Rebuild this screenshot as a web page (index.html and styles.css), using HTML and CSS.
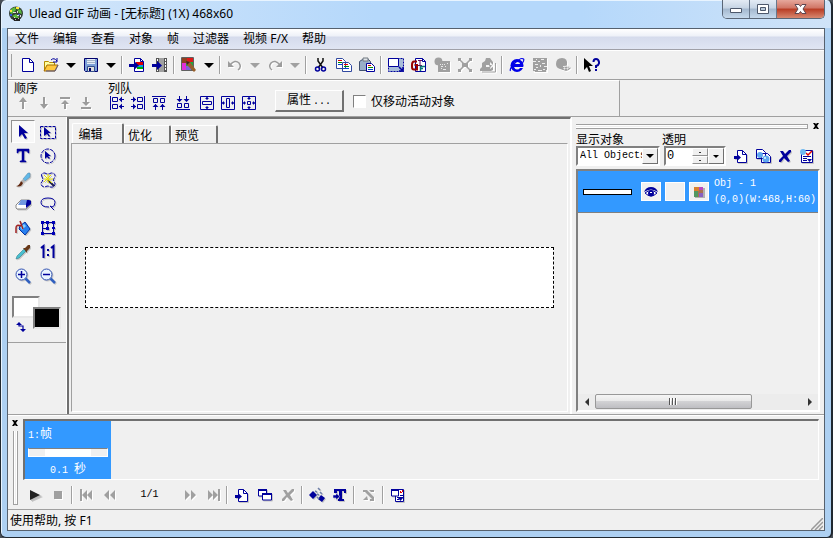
FILE: index.html
```html
<!DOCTYPE html>
<html lang="zh-CN">
<head>
    <meta charset="UTF-8">
    <meta name="viewport" content="width=device-width, initial-scale=1.0">
    <title>Ulead GIF 动画</title>
    <link rel="stylesheet" href="styles.css">
</head>
<body>
    <!-- icon set, 16x16 grid -->
    <svg class="sprite" aria-hidden="true">
        <symbol id="app" viewBox="0 0 16 16"><circle cx="8" cy="7.500" r="7" fill="#344038"/><path d="M3 3l4-2 1 3-4 4-2-1zM9 3l4 1 1 4-3-1zM4 10l4-2 3 3-2 2z" fill="#5bb83c"/><path d="M2 4h2v2H2zM8 1h3v2H8z" fill="#ffe93a"/><path d="M2 8h2v2H2zM10 8h2v1h-2z" fill="#3059d6"/><path d="M5 6h3v1H5zM9 5h1v2H9zM6 11h1v2H6zM12 9h1v2h-1zM9 9h2v1H9z" fill="#ddd"/><path d="M5 12h7v3H6z" fill="#252525"/><path d="M7 13h1v1H7zM10 12h1v1h-1z" fill="#bbb"/></symbol>
        <symbol id="new" viewBox="0 0 16 16"><path d="M2.500 1.500h7l4 4v9h-11z" fill="#fff" stroke="#00009c"/><path d="M9.500 1.500v4h4" fill="none" stroke="#00009c"/></symbol>
        <symbol id="open" viewBox="0 0 16 16"><path d="M1.500 13.500v-9h4l1 1h5v3" fill="#ffffa0" stroke="#b58a00"/><path d="M1 14l3-6h11l-3 6z" fill="#ffc83c" stroke="#a46c00"/><path d="M3 14h9l3-6" fill="none" stroke="#5a5a8c"/><path d="M8 3q3-3 6 1M14 1v4h-4" fill="none" stroke="#00009c"/></symbol>
        <symbol id="save" viewBox="0 0 16 16"><path d="M1.500 1.500h13v13h-12l-1-1z" fill="#7da0d8" stroke="#00006c"/><path d="M4 2h8v5H4z" fill="#e4ecf8"/><path d="M4 3h8v1H4zM4 5h8v1H4z" fill="#a5b4c8"/><path d="M4.500 9.500h7v5h-7z" fill="#ddd" stroke="#334d8c"/><path d="M6 11h2v3H6z" fill="#00006c"/></symbol>
        <symbol id="import" viewBox="0 0 16 16"><path d="M5.500 5V1.500h6l3 3v10h-9V11" fill="#fff" stroke="#00009c"/><path d="M11.500 1.500v3h3" fill="none" stroke="#00009c"/><path d="M7 5h7v3H7z" fill="#e00000"/><path d="M9 8h5v2H9z" fill="#00a0e8"/><path d="M8 10h6v2H8z" fill="#00b000"/><path d="M0 7h5V4l5 4.500L5 13v-3H0z" fill="#00009c"/></symbol>
        <symbol id="film" viewBox="0 0 16 16"><path d="M4 1h11v14H4z" fill="#555"/><path d="M7 1h5v14H7z" fill="#a0a0a0"/><path d="M13 2h1v2h-1zM13 5h1v2h-1zM13 8h1v2h-1zM13 11h1v2h-1zM5 2h1v2H5zM5 12h1v2H5z" fill="#fff"/><path d="M0 7h5V4l5 4.500L5 13v-3H0z" fill="#00009c"/></symbol>
        <symbol id="magic" viewBox="0 0 16 16"><path d="M1 1h11v12H1z" fill="#20a840"/><path d="M1 1h5v5H1z" fill="#904020"/><path d="M6 1h6v4H6z" fill="#e01818"/><path d="M1 6h4v7H1z" fill="#e030d8"/><path d="M5 9h5v4H5z" fill="#8060d8"/><path d="M.5.500h12v13H.5z" fill="none" stroke="#606060"/><path d="M5 4l4 1 6 8-2 2-7-7z" fill="#98602c"/><path d="M5 4l4 1-3 3z" fill="#482020"/></symbol>
        <symbol id="undo" viewBox="0 0 16 16"><path d="M3 8q5-6 9-2 3 4-1 7" fill="none" stroke="#9c9c9c" stroke-width="1.500"/><path d="M1 4v6h6z" fill="#9c9c9c"/></symbol>
        <symbol id="redo" viewBox="0 0 16 16"><path d="M13 8Q8 2 4 6q-3 4 1 7" fill="none" stroke="#9c9c9c" stroke-width="1.500"/><path d="M15 4v6H9z" fill="#9c9c9c"/></symbol>
        <symbol id="cut" viewBox="0 0 16 16"><path d="M5 1v3l5 7M10 1v3l-5 7" fill="none" stroke="#111" stroke-width="1.500"/><circle cx="4.500" cy="12" r="2" fill="none" stroke="#00009c" stroke-width="1.500"/><circle cx="10.500" cy="12" r="2" fill="none" stroke="#00009c" stroke-width="1.500"/></symbol>
        <symbol id="copy" viewBox="0 0 16 16"><path d="M.5 1.500h6l3 3v7h-9zM6.500 5.500h6l3 3v6h-9z" fill="#fff" stroke="#3048a0"/><path d="M2 3.500h4M8 7.500h4" stroke="#d00"/><path d="M2 5.500h4M8 9.500h5" stroke="#080"/><path d="M2 7.500h4M8 11.500h5" stroke="#04c"/></symbol>
        <symbol id="paste" viewBox="0 0 16 16"><path d="M.5 4.500l3-2h6l2 2v9H.5z" fill="#98aec8" stroke="#405070"/><path d="M4 1h5v3H4z" fill="#e0e4e8" stroke="#707880"/><path d="M7.500 6.500h5l3 3v5h-8z" fill="#fff" stroke="#00009c"/><path d="M9 8.500h3" stroke="#d00"/><path d="M9 10.500h5" stroke="#080"/><path d="M9 12.500h5" stroke="#04c"/></symbol>
        <symbol id="resize" viewBox="0 0 16 16"><path d="M1 1h14v14H1z" fill="#a8bdd8"/><path d="M.5 1.500h15v13H.5z" fill="none" stroke="#00009c" stroke-dasharray="2 1"/><path d="M.5 1.500h10v8H.5z" fill="#fff" stroke="#00009c"/><path d="M11 10l3 3M15 10v4h-4" fill="none" stroke="#00009c" stroke-width="1.500"/></symbol>
        <symbol id="gif" viewBox="0 0 16 16"><path d="M4.500 1.500h7l3 3v10h-10z" fill="#fff" stroke="#00009c"/><path d="M11.500 1.500v3h3" fill="none" stroke="#00009c"/><path d="M6 4.500H3Q1 4.500 1 8v2q0 2.500 2 2.500h3V8H3.500" fill="none" stroke="#980000" stroke-width="2"/><path d="M7 3.500h4M9 4v5M7 8.500h4" stroke="#601060"/><path d="M9 9.500h5M9 11.500h3M9.500 9v5" fill="none" stroke="#087878" stroke-width="1.500"/></symbol>
        <symbol id="g-obj" viewBox="0 0 16 16"><circle cx="4.500" cy="4.500" r="4" fill="#a0a0a0"/><path d="M4 4h12v11H4z" fill="#a0a0a0"/><path d="M6 7h1v1H6zM8 7h1v1H8zM10 7h1v1h-1zM7 9h2v1H7zM11 9h1v1h-1zM7 11h1v1H7zM9 12h3v1H9zM13 6h1v1h-1z" fill="#e8e8e8"/></symbol>
        <symbol id="g-x" viewBox="0 0 16 16"><path d="M3 3l10 10M13 3L3 13" stroke="#a0a0a0" stroke-width="1.500"/><path d="M1 1h3v3H1zM12 1h3v3h-3zM1 12h3v3H1zM12 12h3v3h-3zM5 6h6v4H5z" fill="#a0a0a0"/></symbol>
        <symbol id="g-hat" viewBox="0 0 16 16"><path d="M2 10V6l3-2 1-3h4l3 4v6H2zM0 12l2-2h11v3l-2 1H0z" fill="#a0a0a0"/><path d="M6 8h4V5l4 4-4 3v-2H6z" fill="#f4f4f4"/><path d="M9 8h3l-2 3z" fill="#a0a0a0"/><path d="M15.500 6v9H2" fill="none" stroke="#a0a0a0"/></symbol>
        <symbol id="ie" viewBox="0 0 16 16"><circle cx="8" cy="8.500" r="6.500" fill="#0000e8"/><path d="M5 7q0-2 3-2t3 2zM5 10h10v1h-4q-1 1.500-3 1.500T5 10z" fill="#f0f0f0"/><path d="M1.500 14Q0 12 6 6t8.500-4q1 1-1 4" fill="none" stroke="#0000e8" stroke-width="1.200"/></symbol>
        <symbol id="g-mosaic" viewBox="0 0 16 16"><path d="M1 1h14v14H1z" fill="#a0a0a0"/><path d="M4 2h1v1H4zM9 2h3v1H9zM1 4h3v1H1zM6 4h2v1H6zM3 7h3v1H3zM10 6h3v1h-3zM8 8h1v2H8zM4 10h2v1H4zM12 9h3v1h-3zM2 12h2v1H2zM6 13h4v1H6zM11 12h2v1h-2zM14 13h1v2h-1zM1 14h2v1H1z" fill="#eee"/></symbol>
        <symbol id="g-globe" viewBox="0 0 16 16"><path d="M12 8q1-7-5-7-6 0-6 6 0 4 4 5l3 1z" fill="#a0a0a0"/><path d="M6 11q5-5 10 0-5 6-10 0z" fill="#a0a0a0"/><path d="M8 9.500q4-1 7 1M9 11h1v1H9zM12 11h1v1h-1z" fill="none" stroke="#eee"/></symbol>
        <symbol id="help" viewBox="0 0 16 16"><path d="M0 1v12l3-3 2 5 2-1-2-5h4z" fill="#000"/><path d="M9.500 5q0-3 2.500-3t3 3-3 4v2" fill="none" stroke="#00009c" stroke-width="2"/><path d="M11 12h2v2h-2z" fill="#00009c"/></symbol>
        <symbol id="up" viewBox="0 0 16 16"><path d="M8 2l4 5H9v7H7V7H4z" fill="#9c9c9c"/></symbol>
        <symbol id="down" viewBox="0 0 16 16"><path d="M8 14l4-5H9V2H7v7H4z" fill="#9c9c9c"/></symbol>
        <symbol id="top" viewBox="0 0 16 16"><path d="M3 2h10v2H3zM8 5l4 4H9v5H7V9H4z" fill="#9c9c9c"/></symbol>
        <symbol id="bottom" viewBox="0 0 16 16"><path d="M3 12h10v2H3zM8 11L4 7h3V2h2v5h3z" fill="#9c9c9c"/></symbol>
        <symbol id="al-left" viewBox="0 0 16 16"><path d="M1.500 1v14M3.500 2.500h5v4h-5zM3.500 9.500h5v4h-5zM10 4.500h5M10 11.500h5" fill="none" stroke="#00009c"/><path d="M10 4.500l3-3v6zM10 11.500l3-3v6z" fill="#00009c"/></symbol>
        <symbol id="al-right" viewBox="0 0 16 16"><path d="M14.500 1v14M7.500 2.500h5v4h-5zM7.500 9.500h5v4h-5zM1 4.500h5M1 11.500h5" fill="none" stroke="#00009c"/><path d="M6 4.500l-3-3v6zM6 11.500l-3-3v6z" fill="#00009c"/></symbol>
        <symbol id="al-top" viewBox="0 0 16 16"><path d="M1 1.500h14M2.500 3.500h4v4h-4zM9.500 3.500h4v4h-4zM4.500 9v6M11.500 9v6" fill="none" stroke="#00009c"/><path d="M4.500 9l-3 3h6zM11.500 9l-3 3h6z" fill="#00009c"/></symbol>
        <symbol id="al-bottom" viewBox="0 0 16 16"><path d="M1 14.500h14M2.500 8.500h4v4h-4zM9.500 8.500h4v4h-4zM4.500 1v5M11.500 1v5" fill="none" stroke="#00009c"/><path d="M4.500 7l-3-3h6zM11.500 7l-3-3h6z" fill="#00009c"/></symbol>
        <symbol id="ce-v" viewBox="0 0 16 16"><path d="M1.500 1.500h13v13h-13zM3.500 6.500h9v3h-9zM8 2v3M8 11v3" fill="none" stroke="#00009c"/><path d="M6 4l2-2 2 2zM6 12l2 2 2-2z" fill="#00009c"/></symbol>
        <symbol id="ce-h" viewBox="0 0 16 16"><path d="M1.500 1.500h13v13h-13zM6.500 3.500h3v9h-3zM2 8h3M11 8h3" fill="none" stroke="#00009c"/><path d="M4 6L2 8l2 2zM12 6l2 2-2 2z" fill="#00009c"/></symbol>
        <symbol id="ce-b" viewBox="0 0 16 16"><path d="M1.500 1.500h13v13h-13zM6.500 6.500h3v3h-3zM8 2v3M8 11v3M2 8h3M11 8h3" fill="none" stroke="#00009c"/><path d="M6 4l2-2 2 2zM6 12l2 2 2-2zM4 6L2 8l2 2zM12 6l2 2-2 2z" fill="#00009c"/></symbol>
        <symbol id="t-pick" viewBox="0 0 16 16"><path d="M4 1v12l3-3 3 5 2-1-3-5h4z" fill="#00009c"/></symbol>
        <symbol id="t-rect" viewBox="0 0 16 16"><path d="M.5 2.500h15v12H.5z" fill="none" stroke="#00009c" stroke-dasharray="3 1"/><path d="M4 3v9l3-2 2 3 1-1-2-3h3z" fill="#00009c"/></symbol>
        <symbol id="t-text" viewBox="0 0 16 16"><path d="M2 1h12v4h-1q0-2-2-2H9v9q0 1 2 1v1H5v-1q2 0 2-1V3H5Q3 3 3 5H2z" fill="#00009c" stroke="#00009c" stroke-width=".5"/></symbol>
        <symbol id="t-oval" viewBox="0 0 16 16"><circle cx="8" cy="8" r="7" fill="none" stroke="#00009c" stroke-dasharray="4 1"/><path d="M5 3v8l2-2 2 2 1-1-2-2h3z" fill="#00009c"/></symbol>
        <symbol id="t-brush" viewBox="0 0 16 16"><path d="M15 1v4l-5 4-2-2 5-6z" fill="#60b8e8" stroke="#5080a0" stroke-width=".5"/><path d="M8 7l2 2-2 2-2-2z" fill="#b0b0b0"/><path d="M6 9l2 2q-2 5-7 3 3 0 5-5z" fill="#602810"/></symbol>
        <symbol id="t-wand" viewBox="0 0 16 16"><path d="M2 5q-2-4 3-4 3 2 6 0 5 0 4 4-3 3 0 6 0 5-5 4-2-2-5 0-4 0-4-4 3-3 1-6z" fill="none" stroke="#00009c" stroke-dasharray="4 1"/><path d="M8 8l6 6" stroke="#202050" stroke-width="2"/><path d="M8 2v9M4 7h9M4 3l8 8M11 3l-7 7" stroke="#e8e000"/></symbol>
        <symbol id="t-erase" viewBox="0 0 16 16"><path d="M1 9l5-5h8l2 1v3l-5 5H2l-1-1z" fill="#fff" stroke="#888"/><path d="M6 4h8l2 1-4 4H3z" fill="#7098e0"/><path d="M12 4h2l2 1v3l-5 4V8z" fill="#00009c"/></symbol>
        <symbol id="t-lasso" viewBox="0 0 16 16"><path d="M9 11q-8 0-8-4.500T8 2t7 4.500q0 4-3 4.500l-2-1 4 4" fill="none" stroke="#00009c"/></symbol>
        <symbol id="t-fill" viewBox="0 0 16 16"><path d="M5 6l5-4 5 7-5 6-6-6z" fill="#2880f0" stroke="#0030a0"/><path d="M5 7l4-3 2 2-4 4z" fill="#80d0ff"/><path d="M6 6Q1 4 1 8v5M5 1l3 8" stroke="#a02020" stroke-width="1.500" fill="none"/></symbol>
        <symbol id="t-trans" viewBox="0 0 16 16"><path d="M2.500 2.500h11v11h-11zM7.500 2.500v6h-5" fill="none" stroke="#00009c"/><path d="M1 1h3v3H1zM6 1h3v3H6zM12 1h3v3h-3zM1 12h3v3H1zM12 12h3v3h-3zM6 7h3v3H6zM12 7h3v2h-3z" fill="#0000b8"/></symbol>
        <symbol id="t-drop" viewBox="0 0 16 16"><path d="M1 15l1-3 7-7 2 2-7 7z" fill="#48c0d0" stroke="#207080" stroke-width=".5"/><path d="M8 4l2 0 3-3 2 0v3l-3 3v2z" fill="#683818"/></symbol>
        <symbol id="t-one" viewBox="0 0 16 16"><path d="M1 4l2.500-2v12M11 4l2.500-2v12" fill="none" stroke="#00009c" stroke-width="2"/><path d="M7 5h2v2H7zM7 10h2v2H7z" fill="#00009c"/></symbol>
        <symbol id="t-zin" viewBox="0 0 16 16"><circle cx="6.500" cy="6.500" r="5.500" fill="#e8f4ff" stroke="#3050b0"/><path d="M3 6.500h7M6.500 3v7" stroke="#00009c" stroke-width="1.500"/><path d="M10.500 10.500l4.500 4.500" stroke="#3060c0" stroke-width="2.500"/></symbol>
        <symbol id="t-zout" viewBox="0 0 16 16"><circle cx="6.500" cy="6.500" r="5.500" fill="#e8f4ff" stroke="#3050b0"/><path d="M3 6.500h7" stroke="#00009c" stroke-width="1.500"/><path d="M10.500 10.500l4.500 4.500" stroke="#3060c0" stroke-width="2.500"/></symbol>
        <symbol id="swap" viewBox="0 0 10 10"><path d="M3 1v3h4v5" fill="none" stroke="#00009c" stroke-width="1.200"/><path d="M0 3l3-3 3 3zM4 7l3 3 3-3z" fill="#00009c"/></symbol>
        <symbol id="add" viewBox="0 0 16 16"><path d="M4.500 7V2.500h5l4 4v8h-9V11" fill="#fff" stroke="#00009c"/><path d="M9.500 2.500v4h4" fill="none" stroke="#00009c"/><path d="M1 8h3V6l4 3.500L4 13v-2H1z" fill="#00009c"/></symbol>
        <symbol id="dup" viewBox="0 0 16 16"><path d="M1.500 1.500h6l3 3v6h-9zM6.500 5.500h6l3 3v6h-9z" fill="#fff" stroke="#00009c"/><circle cx="5" cy="7" r="3" fill="#60a8f0"/><circle cx="11" cy="11" r="3.500" fill="#60a8f0"/><circle cx="10" cy="10" r="1" fill="#e0ffff"/></symbol>
        <symbol id="del" viewBox="0 0 16 16"><path d="M3 3h3l2 3 4-4h2v2l-4 4 3 5-2 1-4-4-3 4H2v-2l4-4z" fill="#00009c"/></symbol>
        <symbol id="g-del" viewBox="0 0 16 16"><path d="M3 3h3l2 3 4-4h2v2l-4 4 3 5-2 1-4-4-3 4H2v-2l4-4z" fill="#a0a0a0"/></symbol>
        <symbol id="props" viewBox="0 0 16 16"><path d="M2.500 2.500h11v12h-11z" fill="#fff" stroke="#00009c"/><path d="M4 8.500h8M4 10.500h4M4 12.500h4" stroke="#00009c"/><path d="M8 11h5l-2.500 3z" fill="#00009c"/><path d="M7 5l2 2 4-4" fill="none" stroke="#d00" stroke-width="1.500"/><circle cx="4" cy="4" r="3" fill="#70b8f0"/></symbol>
        <symbol id="eye" viewBox="0 0 16 16"><path d="M2 9q6-5 12 0-6 6-12 0z" fill="#fff" stroke="#00009c"/><circle cx="8" cy="9.500" r="3" fill="#00009c"/><path d="M1 8q2-5 7-5t7 5Q8 3 1 8z" fill="#00009c"/><path d="M7 8h2v1H7z" fill="#fff"/></symbol>
        <symbol id="thumb" viewBox="0 0 16 16"><path d="M4 4h10v10H4z" fill="#b0b0b0"/><path d="M3 3h9v10H3z" fill="#a87050"/><path d="M3 3h5v4H3z" fill="#d88030"/><path d="M8 3h4v3H8z" fill="#b848c0"/><path d="M3 7h4v6H3z" fill="#509860"/><path d="M8 9h4v4H8z" fill="#8860c0"/></symbol>
        <symbol id="play" viewBox="0 0 16 16"><path d="M4 5l11 4-11 5z" fill="#bbb"/><path d="M3 3l10 5-10 5z" fill="#222"/></symbol>
        <symbol id="stop" viewBox="0 0 16 16"><path d="M4 4h8v8H4z" fill="#a0a0a0"/></symbol>
        <symbol id="first" viewBox="0 0 16 16"><path d="M1 2h2v12H1zM3 8l5-5v10zM8 8l5-5v10z" fill="#a0a0a0"/></symbol>
        <symbol id="prev" viewBox="0 0 16 16"><path d="M2 8l5-5v10zM8 8l5-5v10z" fill="#a0a0a0"/></symbol>
        <symbol id="next" viewBox="0 0 16 16"><path d="M14 8L9 3v10zM8 8L3 3v10z" fill="#a0a0a0"/></symbol>
        <symbol id="last" viewBox="0 0 16 16"><path d="M15 2h-2v12h2zM13 8L8 3v10zM8 8L3 3v10z" fill="#a0a0a0"/></symbol>
        <symbol id="frames" viewBox="0 0 16 16"><path d="M1.500 3h8v6h-8z" fill="#fff" stroke="#00009c"/><path d="M1 2h9v2H1zM5 6h10v2H5z" fill="#00009c"/><path d="M5.500 7h9v6h-9z" fill="#fff" stroke="#00009c"/><path d="M5 6h10v2H5z" fill="#00009c"/></symbol>
        <symbol id="tween" viewBox="0 0 16 16"><path d="M4 4l4 4-4 4-4-4zM12 8l4 3-3 4-4-3z" fill="#00009c"/><path d="M6 4l2 1M8 7l2 1M9 1l2 2M11 5l2 2M8 10l2 2" stroke="#7080a8" stroke-width="1.500"/></symbol>
        <symbol id="ttext" viewBox="0 0 16 16"><path d="M2 2h12v4h-2V4h-2v8h2v2H6v-2h1V4H5v2H2z" fill="#00009c"/><path d="M1 8h3V6l4 3.500L4 13v-2H1z" fill="#00009c" stroke="#f0f0f0" stroke-width=".5"/></symbol>
        <symbol id="g-rev" viewBox="0 0 16 16"><path d="M2 3h4l7 7v4H9v-2h2L4 5H2zM8 3h5v2h-3l4 4M7 13H2l4-4" fill="#a0a0a0"/></symbol>
        <symbol id="fprops" viewBox="0 0 16 16"><path d="M5.500 2.500h8v12h-8z" fill="#fff" stroke="#00009c"/><path d="M1.500 3h7v6h-7z" fill="#fff" stroke="#00009c"/><path d="M1 2h8v2H1z" fill="#00009c"/><path d="M10 4h1v2h-1zM11 5h1v1h-1zM12 3h1v2h-1z" fill="#d00"/><path d="M10 8.500h3M7 10.500h6M7 12.500h2" stroke="#00009c"/><path d="M8 11h5l-2.500 3z" fill="#00009c"/></symbol>
        <symbol id="cross" viewBox="0 0 8 8"><path d="M1 1h2l1 1 1-1h2L5 4l2 3H5L4 6 3 7H1l2-3z" fill="#000"/></symbol>
    </svg>

    <div class="window">
        <header class="titlebar">
            <svg class="icon"><use href="#app"/></svg>
            <h1>Ulead GIF 动画 - [无标题] (1X) 468x60</h1>
            <div class="caption-buttons">
                <button class="cap" aria-label="最小化"><svg viewBox="0 0 13 12"><path d="M.5 5.500h11v4H.5z" fill="#fff" stroke="#4d586b"/></svg></button>
                <button class="cap" aria-label="最大化"><svg viewBox="0 0 13 12"><path d="M.5 1.500h11v9H.5z" fill="#fff" stroke="#4d586b"/><path d="M3.500 4.500h5v3h-5z" fill="#b8c8d8" stroke="#4d586b"/></svg></button>
                <button class="cap close" aria-label="关闭"><svg viewBox="0 0 13 12"><path d="M1 1.500h4l1.500 2L8 1.500h4L9 6l3 4.500H8l-1.500-2-1.500 2H1L4 6z" fill="#fff" stroke="#5c4650"/></svg></button>
            </div>
        </header>

        <div class="client">
            <nav class="menu">
                <a href="#">文件</a>
                <a href="#">编辑</a>
                <a href="#">查看</a>
                <a href="#">对象</a>
                <a href="#">帧</a>
                <a href="#">过滤器</a>
                <a href="#">视频 F/X</a>
                <a href="#">帮助</a>
            </nav>

            <div class="toolbar">
                <button class="tb" aria-label="新建"><svg class="icon"><use href="#new"/></svg></button>
                <button class="tb" aria-label="打开"><svg class="icon"><use href="#open"/></svg></button>
                <button class="drop" aria-label="最近文件"></button>
                <button class="tb" aria-label="保存"><svg class="icon"><use href="#save"/></svg></button>
                <button class="drop" aria-label="保存选项"></button>
                <span class="sep"></span>
                <button class="tb" aria-label="添加图像"><svg class="icon"><use href="#import"/></svg></button>
                <button class="tb" aria-label="添加视频"><svg class="icon"><use href="#film"/></svg></button>
                <span class="sep"></span>
                <button class="tb" aria-label="图像编辑器"><svg class="icon"><use href="#magic"/></svg></button>
                <button class="drop" aria-label="编辑器列表"></button>
                <span class="sep"></span>
                <button class="tb" disabled aria-label="撤消"><svg class="icon"><use href="#undo"/></svg></button>
                <button class="drop" disabled aria-label="撤消列表"></button>
                <button class="tb" disabled aria-label="重做"><svg class="icon"><use href="#redo"/></svg></button>
                <button class="drop" disabled aria-label="重做列表"></button>
                <span class="sep"></span>
                <button class="tb" aria-label="剪切"><svg class="icon"><use href="#cut"/></svg></button>
                <button class="tb" aria-label="复制"><svg class="icon"><use href="#copy"/></svg></button>
                <button class="tb" aria-label="粘贴"><svg class="icon"><use href="#paste"/></svg></button>
                <span class="sep"></span>
                <button class="tb" aria-label="画布尺寸"><svg class="icon"><use href="#resize"/></svg></button>
                <button class="tb" aria-label="GIF 信息"><svg class="icon"><use href="#gif"/></svg></button>
                <button class="tb" disabled aria-label="对象"><svg class="icon"><use href="#g-obj"/></svg></button>
                <button class="tb" disabled aria-label="变形"><svg class="icon"><use href="#g-x"/></svg></button>
                <button class="tb" disabled aria-label="导出"><svg class="icon"><use href="#g-hat"/></svg></button>
                <span class="sep"></span>
                <button class="tb" aria-label="浏览器预览"><svg class="icon"><use href="#ie"/></svg></button>
                <button class="tb" disabled aria-label="马赛克"><svg class="icon"><use href="#g-mosaic"/></svg></button>
                <button class="tb" disabled aria-label="查看"><svg class="icon"><use href="#g-globe"/></svg></button>
                <span class="sep"></span>
                <button class="tb" aria-label="帮助"><svg class="icon"><use href="#help"/></svg></button>
            </div>

            <div class="attributes">
                <section class="group order">
                    <h2>顺序</h2>
                    <div class="row">
                        <button class="ab" disabled aria-label="上移"><svg class="icon"><use href="#up"/></svg></button>
                        <button class="ab" disabled aria-label="下移"><svg class="icon"><use href="#down"/></svg></button>
                        <button class="ab" disabled aria-label="置顶"><svg class="icon"><use href="#top"/></svg></button>
                        <button class="ab" disabled aria-label="置底"><svg class="icon"><use href="#bottom"/></svg></button>
                    </div>
                </section>
                <section class="group">
                    <h2>列队</h2>
                    <div class="row">
                        <button class="ab" aria-label="左对齐"><svg class="icon"><use href="#al-left"/></svg></button>
                        <button class="ab" aria-label="右对齐"><svg class="icon"><use href="#al-right"/></svg></button>
                        <button class="ab" aria-label="顶对齐"><svg class="icon"><use href="#al-top"/></svg></button>
                        <button class="ab spaced" aria-label="底对齐"><svg class="icon"><use href="#al-bottom"/></svg></button>
                        <button class="ab spaced" aria-label="垂直居中"><svg class="icon"><use href="#ce-v"/></svg></button>
                        <button class="ab" aria-label="水平居中"><svg class="icon"><use href="#ce-h"/></svg></button>
                        <button class="ab" aria-label="居中"><svg class="icon"><use href="#ce-b"/></svg></button>
                    </div>
                </section>
                <button class="push">属性<span class="dots">...</span></button>
                <label class="check"><input type="checkbox"> 仅移动活动对象</label>
            </div>

            <main class="work">
                <aside class="tools">
                    <div class="tool-grid">
                        <button class="tool selected" aria-label="选取"><svg class="icon"><use href="#t-pick"/></svg></button>
                        <button class="tool" aria-label="矩形选取"><svg class="icon"><use href="#t-rect"/></svg></button>
                        <button class="tool" aria-label="文字"><svg class="icon"><use href="#t-text"/></svg></button>
                        <button class="tool" aria-label="椭圆选取"><svg class="icon"><use href="#t-oval"/></svg></button>
                        <button class="tool" aria-label="画笔"><svg class="icon"><use href="#t-brush"/></svg></button>
                        <button class="tool" aria-label="魔术棒"><svg class="icon"><use href="#t-wand"/></svg></button>
                        <button class="tool" aria-label="橡皮擦"><svg class="icon"><use href="#t-erase"/></svg></button>
                        <button class="tool" aria-label="套索"><svg class="icon"><use href="#t-lasso"/></svg></button>
                        <button class="tool" aria-label="填充"><svg class="icon"><use href="#t-fill"/></svg></button>
                        <button class="tool" aria-label="变形"><svg class="icon"><use href="#t-trans"/></svg></button>
                        <button class="tool" aria-label="滴管"><svg class="icon"><use href="#t-drop"/></svg></button>
                        <button class="tool" aria-label="实际大小"><svg class="icon"><use href="#t-one"/></svg></button>
                        <button class="tool" aria-label="放大"><svg class="icon"><use href="#t-zin"/></svg></button>
                        <button class="tool" aria-label="缩小"><svg class="icon"><use href="#t-zout"/></svg></button>
                    </div>
                    <div class="swatches">
                        <button class="swatch white" aria-label="前景色"></button>
                        <button class="swatch black" aria-label="背景色"></button>
                        <button class="swap" aria-label="交换颜色"><svg><use href="#swap"/></svg></button>
                    </div>
                </aside>

                <section class="stage">
                    <div class="tabs">
                        <button class="tab active">编辑</button>
                        <button class="tab">优化</button>
                        <button class="tab">预览</button>
                    </div>
                    <div class="page">
                        <div class="canvas"></div>
                    </div>
                </section>

                <aside class="objects">
                    <div class="panel-head">
                        <span class="grip"></span>
                        <button class="x" aria-label="关闭面板"><svg><use href="#cross"/></svg></button>
                    </div>
                    <div class="fields">
                        <div class="field show">
                            <label for="show">显示对象</label>
                            <div class="combo">
                                <select id="show"><option>All Objects</option></select>
                                <span class="combo-arrow"></span>
                            </div>
                        </div>
                        <div class="field alpha">
                            <label for="alpha">透明</label>
                            <div class="spin">
                                <input id="alpha" type="text" value="0">
                                <div class="spin-buttons">
                                    <button aria-label="增加"></button>
                                    <button aria-label="减少"></button>
                                </div>
                                <button class="spin-drop" aria-label="滑块"></button>
                            </div>
                        </div>
                        <div class="object-actions">
                            <button class="ab" aria-label="添加对象"><svg class="icon"><use href="#add"/></svg></button>
                            <button class="ab" aria-label="复制对象"><svg class="icon"><use href="#dup"/></svg></button>
                            <button class="ab" aria-label="删除对象"><svg class="icon"><use href="#del"/></svg></button>
                            <button class="ab" aria-label="对象属性"><svg class="icon"><use href="#props"/></svg></button>
                        </div>
                    </div>
                    <div class="object-list">
                        <div class="object">
                            <span class="object-thumb"></span>
                            <button class="cell" aria-label="可见"><svg class="icon"><use href="#eye"/></svg></button>
                            <button class="cell" aria-label="锁定"></button>
                            <button class="cell" aria-label="透明色"><svg class="icon"><use href="#thumb"/></svg></button>
                            <div class="object-text mono">
                                <span>Obj - 1</span>
                                <span>(0,0)(W:468,H:60)</span>
                            </div>
                        </div>
                        <div class="scrollbar">
                            <button class="arrow left" aria-label="向左"></button>
                            <div class="track"><div class="scroll-thumb"><i></i><i></i><i></i></div></div>
                            <button class="arrow right" aria-label="向右"></button>
                        </div>
                    </div>
                </aside>
            </main>

            <section class="frames">
                <div class="side">
                    <button class="x" aria-label="关闭帧面板"><svg><use href="#cross"/></svg></button>
                    <span class="vgrip"></span>
                </div>
                <div class="frames-main">
                    <div class="strip">
                        <div class="frame">
                            <span><span class="mono">1:</span>帧</span>
                            <span class="frame-thumb"></span>
                            <span class="delay"><span class="mono">0.1 </span>秒</span>
                        </div>
                    </div>
                    <div class="controls">
                        <button class="tb" aria-label="播放"><svg class="icon"><use href="#play"/></svg></button>
                        <button class="tb" disabled aria-label="停止"><svg class="icon"><use href="#stop"/></svg></button>
                        <span class="sep"></span>
                        <button class="tb" disabled aria-label="第一帧"><svg class="icon"><use href="#first"/></svg></button>
                        <button class="tb" disabled aria-label="上一帧"><svg class="icon"><use href="#prev"/></svg></button>
                        <span class="counter mono">1/1</span>
                        <button class="tb" disabled aria-label="下一帧"><svg class="icon"><use href="#next"/></svg></button>
                        <button class="tb" disabled aria-label="最后帧"><svg class="icon"><use href="#last"/></svg></button>
                        <span class="sep"></span>
                        <button class="tb" aria-label="添加帧"><svg class="icon"><use href="#add"/></svg></button>
                        <button class="tb" aria-label="复制帧"><svg class="icon"><use href="#frames"/></svg></button>
                        <button class="tb" disabled aria-label="删除帧"><svg class="icon"><use href="#g-del"/></svg></button>
                        <span class="sep"></span>
                        <button class="tb" aria-label="中间帧"><svg class="icon"><use href="#tween"/></svg></button>
                        <button class="tb" aria-label="添加文本条"><svg class="icon"><use href="#ttext"/></svg></button>
                        <span class="sep"></span>
                        <button class="tb" disabled aria-label="反转帧顺序"><svg class="icon"><use href="#g-rev"/></svg></button>
                        <span class="sep"></span>
                        <button class="tb" aria-label="帧属性"><svg class="icon"><use href="#fprops"/></svg></button>
                    </div>
                </div>
            </section>

            <footer class="status">
                <span>使用帮助, 按 F1</span>
                <svg class="sizer" viewBox="0 0 12 12"><path d="M0 12L12 0M4 12l8-8M8 12l4-4" stroke="#9a9a9a" stroke-width="1.500"/></svg>
            </footer>
        </div>
    </div>
</body>
</html>
```

FILE: styles.css
```css
* {
    box-sizing: border-box;
}
body {
    margin: 0;
    background: #4a5058;
    font-family: "Noto Sans CJK SC", sans-serif;
    font-size: 12px;
    line-height: 16px;
    color: #000;
}
button {
    padding: 0;
    border: none;
    background: none;
    font: inherit;
    color: inherit;
}
h1, h2 {
    margin: 0;
    font-size: 12px;
    font-weight: normal;
}
.sprite {
    position: absolute;
    width: 0;
    height: 0;
}
.icon {
    display: block;
    flex: none;
    width: 16px;
    height: 16px;
}
.mono {
    font-family: "Liberation Mono", monospace;
    font-size: 10px;
}

/* window frame */
.window {
    display: flex;
    flex-direction: column;
    height: 100vh;
    padding: 0 6px 6px;
    border: 1px solid #202830;
    border-width: 0 2px 1px 1px;
    border-radius: 6px;
    background: linear-gradient(90deg, #d5e7fa, #b5d8fb 45%, #b5d8fb 70%, #cfe3f8) top / 100% 28px no-repeat, #add0f2;
    box-shadow: inset 1px 1px 0 #e8f4ff;
}
.titlebar {
    display: flex;
    align-items: center;
    height: 28px;
    flex: none;
    gap: 5px;
    padding-left: 1px;
}
.titlebar h1 {
    flex: 1;
    font-family: "Noto Sans", "Noto Sans CJK SC", sans-serif;
}
.caption-buttons {
    display: flex;
    align-self: flex-start;
    height: 19px;
    border: 1px solid #5a6676;
    border-top: none;
    border-radius: 0 0 5px 5px;
    overflow: hidden;
}
.cap {
    display: flex;
    align-items: center;
    justify-content: center;
    width: 27px;
    border-right: 1px solid #68788c;
    background: linear-gradient(#e3ebf4, #c6d4e4 45%, #a4b8ce 50%, #c6d9ec);
}
.cap svg {
    width: 13px;
    height: 12px;
}
.cap.close {
    width: 47px;
    border-right: none;
    background: linear-gradient(#e6a89c, #d07464 45%, #b83c24 50%, #d88870);
}
.client {
    flex: 1;
    min-height: 0;
    display: flex;
    flex-direction: column;
    border: 1px solid #56616e;
    background: #f0f0f0;
}

/* menu and toolbars */
.menu {
    display: flex;
    align-items: center;
    flex: none;
    height: 21px;
    border-bottom: 1px solid #a0a0a8;
    background: linear-gradient(#fff, #eef1f8 35%, #d5dbec 40%, #e0e5f3);
    font-family: "Noto Sans", "Noto Sans CJK SC", sans-serif;
}
.menu a {
    padding: 0 7px;
    color: #000;
    text-decoration: none;
}
.toolbar {
    display: flex;
    align-items: center;
    flex: none;
    height: 30px;
    padding-left: 8px;
    border-top: 1px solid #fff;
    border-bottom: 1px solid #a0a0a0;
    background: linear-gradient(#a0a0a0, #a0a0a0) 3px 3px / 1px 23px no-repeat;
}
.tb, .ab, .tool {
    display: flex;
    align-items: center;
    justify-content: center;
    flex: none;
    width: 23px;
    height: 22px;
}
.ab {
    width: 21px;
    height: 20px;
}
button:disabled .icon {
    filter: drop-shadow(1px 1px 0 #fff);
}
.drop {
    flex: none;
    width: 17px;
    height: 22px;
}
.drop::before {
    content: "";
    display: block;
    width: 0;
    margin: 0 auto;
    border: 5px solid transparent;
    border-top-color: #000;
    border-bottom: none;
}
.drop:disabled::before {
    border-top-color: #a0a0a0;
}
.sep {
    flex: none;
    width: 2px;
    height: 18px;
    margin: 0 2px;
    border-left: 1px solid #a0a0a0;
    border-right: 1px solid #fff;
}
.attributes {
    display: flex;
    flex: none;
    width: 75%;
    height: 36px;
    padding-left: 6px;
    border-top: 1px solid #fff;
    border-right: 1px solid #a0a0a0;
}
.group h2 {
    line-height: 14px;
}
.group.order {
    width: 94px;
}
.group .row {
    display: flex;
    margin: -2px 0 0 -2px;
}
.spaced {
    margin-left: 3px;
}
.push {
    align-self: flex-end;
    width: 69px;
    height: 22px;
    margin: 0 0 4px 16px;
    border: 1px solid #fff;
    border-right: 2px solid #707070;
    border-bottom: 2px solid #707070;
}
.dots {
    margin-left: 2px;
    font-family: "Liberation Mono", monospace;
    font-size: 10px;
}
.check {
    display: flex;
    align-items: center;
    gap: 5px;
    margin-left: 9px;
    padding-top: 5px;
}
.check input {
    appearance: none;
    width: 13px;
    height: 13px;
    margin: 0;
    border: 1px solid #fff;
    border-top-color: #808080;
    border-left-color: #808080;
    background: #fff;
}

/* main area */
.work {
    display: flex;
    flex: 1;
    min-height: 0;
    border-top: 1px solid #a0a0a0;
}
.tools {
    flex: none;
    width: 59px;
    padding: 3px 3px 0;
    border-right: 1px solid #fff;
}
.tool-grid {
    display: grid;
    grid-template-columns: 24px 26px;
    grid-auto-rows: 24px;
    justify-items: center;
}
.tool {
    width: 24px;
    height: 23px;
}
.tool .icon, .object-actions .icon, .controls .tb:enabled .icon {
    filter: drop-shadow(1px 1px 0 #c4c4c4);
}
.tool.selected {
    border: 1px solid #fff;
    border-top-color: #909090;
    border-left-color: #909090;
    background: #f8f8f8;
}
.swatches {
    position: relative;
    height: 55px;
    margin: 0 -3px;
    border-bottom: 1px solid #a0a0a0;
}
.swatch {
    position: absolute;
    width: 28px;
    height: 22px;
    border: 2px solid #e8e8e8;
    border-top-color: #808080;
    border-left-color: #808080;
}
.swatch.white {
    top: 8px;
    left: 4px;
    background: #fff;
}
.swatch.black {
    top: 19px;
    left: 25px;
    background: #000;
}
.swap {
    position: absolute;
    top: 34px;
    left: 8px;
}
.swap svg {
    display: block;
    width: 10px;
    height: 10px;
}
.stage {
    flex: 1;
    min-width: 0;
    display: flex;
    flex-direction: column;
    padding: 3px 2px 2px;
    border-left: 2px solid #707070;
    border-top: 2px solid #707070;
    border-right: 1px solid #fff;
}
.tabs {
    display: flex;
    align-items: flex-end;
    height: 21px;
    flex: none;
    padding-left: 1px;
}
.tab {
    width: 47px;
    height: 18px;
    padding-right: 14px;
    border-top: 1px solid #fff;
    border-left: 1px solid #fff;
    border-right: 2px solid #707070;
    border-radius: 2px 2px 0 0;
    line-height: 16px;
}
.tab.active {
    width: 52px;
    height: 20px;
}
.page {
    flex: 1;
    display: flex;
    align-items: center;
    justify-content: center;
    border: 1px solid #fff;
    border-top-color: #a0a0a0;
    border-left-color: #a0a0a0;
}
.canvas {
    width: 469px;
    max-width: 100%;
    height: 61px;
    border: 1px dashed #000;
    background: #fff;
}

/* object panel */
.objects {
    flex: none;
    width: 253px;
    display: flex;
    flex-direction: column;
    padding: 4px 4px 2px;
    border-left: 1px solid #fff;
}
.panel-head {
    display: flex;
    align-items: center;
    gap: 4px;
    height: 10px;
}
.grip {
    flex: 1;
    height: 5px;
    border: 1px solid #a0a0a0;
    border-left: none;
    background: linear-gradient(#fff 1px, #f0f0f0 1px, #f0f0f0 2px, #fff 2px);
}
.x {
    width: 8px;
    height: 8px;
}
.x svg {
    display: block;
    width: 8px;
    height: 8px;
}
.fields {
    display: flex;
    align-items: flex-end;
    gap: 4px;
    margin-bottom: 3px;
}
.field label {
    display: block;
    line-height: 15px;
}
.alpha label {
    text-indent: -2px;
}
.combo, .spin {
    display: flex;
    height: 20px;
    border: 2px solid #fff;
    border-top-color: #808080;
    border-left-color: #808080;
    background: #fff;
}
.combo {
    width: 84px;
}
.combo select {
    flex: 1;
    min-width: 0;
    appearance: none;
    padding: 0 0 0 2px;
    border: none;
    border-radius: 0;
    background: none;
    font: 10px/16px "Liberation Mono", monospace;
    color: #000;
    text-overflow: clip;
}
.combo-arrow, .spin-drop {
    flex: none;
    width: 16px;
    border: 1px solid #fff;
    border-right-color: #707070;
    border-bottom-color: #707070;
    background: #f0f0f0;
}
.combo-arrow {
    pointer-events: none;
}
.combo-arrow::before, .spin-drop::before {
    content: "";
    display: block;
    width: 0;
    margin: 5px auto 0;
    border: 4px solid transparent;
    border-top-color: #000;
    border-bottom: none;
}
.spin-drop::before {
    margin-top: 0;
    border-width: 3px 3px 0;
}
.alpha {
    width: 62px;
}
.spin input {
    flex: 1;
    width: 10px;
    padding: 0 0 0 1px;
    border: none;
    background: none;
    font: 12px/16px "Liberation Mono", monospace;
}
.spin-buttons {
    display: flex;
    flex-direction: column;
    width: 16px;
}
.spin-buttons button {
    flex: 1;
    border: 1px solid #fff;
    border-right-color: #909090;
    border-bottom-color: #909090;
    background: linear-gradient(#333, #333) center / 2px 1px no-repeat #f0f0f0;
}
.object-actions {
    display: flex;
    gap: 1px;
}
.object-list {
    flex: 1;
    display: flex;
    flex-direction: column;
    justify-content: space-between;
    min-height: 0;
    border: 2px solid #fff;
    border-top-color: #808080;
    border-left-color: #808080;
}
.object {
    display: flex;
    align-items: center;
    height: 42px;
    padding-left: 5px;
    border-bottom: 1px solid #808080;
    background: #3399ff;
    color: #fff;
    overflow: hidden;
}
.object-thumb {
    flex: none;
    width: 49px;
    height: 6px;
    margin-right: 9px;
    border: 1px solid #000;
    background: #fff;
}
.cell {
    display: flex;
    align-items: center;
    justify-content: center;
    flex: none;
    width: 20px;
    height: 19px;
    margin-right: 4px;
    border: 1px solid #fff;
    background: #f0f0f0;
}
.object-text {
    display: flex;
    flex-direction: column;
    margin-left: 1px;
    white-space: nowrap;
}
.scrollbar {
    display: flex;
    height: 16px;
    background: #ececec;
}
.arrow {
    flex: none;
    width: 17px;
}
.arrow::before {
    content: "";
    display: block;
    width: 0;
    margin: 0 auto;
    border: 4px solid transparent;
}
.arrow.left::before {
    border-left: none;
    border-right-color: #333;
}
.arrow.right::before {
    border-right: none;
    border-left-color: #333;
}
.track {
    flex: 1;
}
.scroll-thumb {
    display: flex;
    align-items: center;
    justify-content: center;
    gap: 1px;
    width: 76%;
    height: 15px;
    border: 1px solid #989898;
    border-radius: 2px;
    background: linear-gradient(#f5f5f5, #e8e8e8 48%, #d2d2d4 50%, #bebec2);
}
.scroll-thumb i {
    width: 2px;
    height: 7px;
    background: linear-gradient(90deg, #555 50%, #fff 50%);
}

/* frame panel */
.frames {
    display: flex;
    flex: none;
    gap: 5px;
    padding: 4px 5px 4px 4px;
    border-top: 1px solid #a0a0a0;
    box-shadow: inset 0 1px 0 #fff;
}
.side {
    display: flex;
    flex-direction: column;
    align-items: center;
    width: 6px;
    gap: 4px;
}
.vgrip {
    flex: 1;
    width: 5px;
    border: 1px solid #a0a0a0;
    border-top: none;
    background: linear-gradient(90deg, #fff 1px, #f0f0f0 1px, #f0f0f0 2px, #fff 2px);
}
.frames-main {
    flex: 1;
    min-width: 0;
}
.strip {
    display: flex;
    height: 61px;
    border: 2px solid #707070;
    border-right: 1px solid #fff;
    border-bottom: 1px solid #fff;
}
.frame {
    display: flex;
    flex-direction: column;
    width: 86px;
    padding: 4px 3px 0;
    background: #3399ff;
    color: #fff;
}
.frame-thumb {
    height: 10px;
    margin: 4px 0 3px;
    border: 1px solid #fff;
    border-top-color: #808080;
    background: linear-gradient(#fff, #fff) center / 46px 8px no-repeat #f0f0f0;
}
.delay {
    text-align: center;
}
.delay .mono {
    white-space: pre;
}
.controls {
    display: flex;
    align-items: center;
    height: 25px;
    padding-top: 5px;
}
.counter {
    width: 57px;
    text-align: center;
}

.status {
    display: flex;
    align-items: center;
    justify-content: space-between;
    flex: none;
    height: 21px;
    padding: 2px 1px 0 2px;
    border-top: 1px solid #a0a0a0;
    font-family: "Noto Sans", "Noto Sans CJK SC", sans-serif;
}
.sizer {
    align-self: flex-end;
    width: 12px;
    height: 12px;
}
```
